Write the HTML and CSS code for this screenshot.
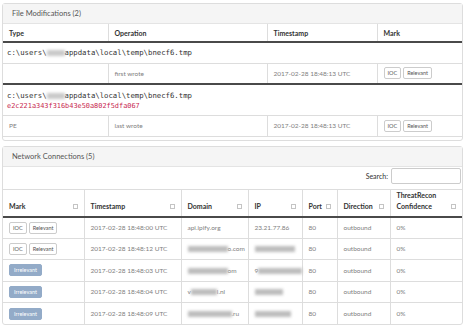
FILE: index.html
```html
<!DOCTYPE html>
<html lang="en">
<head>
    <meta charset="UTF-8">
    <title>Report</title>
    <link rel="stylesheet" href="styles.css">
</head>
<body>
<div class="page">
    <div class="panel">
        <div class="panel-heading">File Modifications (2)</div>
        <table class="tbl files">
            <colgroup>
                <col class="c-type">
                <col class="c-op">
                <col class="c-ts">
                <col>
            </colgroup>
            <thead>
            <tr><th>Type</th><th>Operation</th><th>Timestamp</th><th>Mark</th></tr>
            </thead>
            <tbody class="group">
            <tr class="path">
                <td colspan="4"><code class="fname">c:\users\<span class="blur b18"></span>appdata\local\temp\bnecf6.tmp</code></td>
            </tr>
            <tr class="op">
                <td></td>
                <td>first wrote</td>
                <td>2017-02-28 18:48:13 UTC</td>
                <td><button class="btn">IOC</button><button class="btn">Relevant</button></td>
            </tr>
            </tbody>
            <tbody class="group">
            <tr class="path hash-row">
                <td colspan="4">
                    <code class="fname">c:\users\<span class="blur b18"></span>appdata\local\temp\bnecf6.tmp</code>
                    <code class="hash">e2c221a343f316b43e50a802f5dfa067</code>
                </td>
            </tr>
            <tr class="op">
                <td>PE</td>
                <td>last wrote</td>
                <td>2017-02-28 18:48:13 UTC</td>
                <td><button class="btn">IOC</button><button class="btn">Relevant</button></td>
            </tr>
            </tbody>
        </table>
    </div>

    <div class="panel">
        <div class="panel-heading">Network Connections (5)</div>
        <div class="search">
            <label for="q">Search:</label>
            <input id="q" type="text">
        </div>
        <table class="tbl net">
            <colgroup>
                <col class="n-mark">
                <col class="n-ts">
                <col class="n-dom">
                <col class="n-ip">
                <col class="n-port">
                <col class="n-dir">
                <col>
            </colgroup>
            <thead>
            <tr>
                <th><div class="th-in">Mark<span class="sort"></span></div></th>
                <th><div class="th-in">Timestamp<span class="sort"></span></div></th>
                <th><div class="th-in">Domain<span class="sort"></span></div></th>
                <th><div class="th-in">IP<span class="sort"></span></div></th>
                <th><div class="th-in">Port<span class="sort"></span></div></th>
                <th><div class="th-in">Direction<span class="sort"></span></div></th>
                <th><div class="th-in">ThreatRecon<br>Confidence<span class="sort"></span></div></th>
            </tr>
            </thead>
            <tbody>
            <tr>
                <td><button class="btn">IOC</button><button class="btn">Relevant</button></td>
                <td>2017-02-28 18:48:00 UTC</td>
                <td>api.ipify.org</td>
                <td>23.21.77.86</td>
                <td>80</td>
                <td>outbound</td>
                <td>0%</td>
            </tr>
            <tr>
                <td><button class="btn">IOC</button><button class="btn">Relevant</button></td>
                <td>2017-02-28 18:48:12 UTC</td>
                <td class="clip"><span class="blur b40"></span>o.com</td>
                <td><span class="blur b40"></span></td>
                <td>80</td>
                <td>outbound</td>
                <td>0%</td>
            </tr>
            <tr>
                <td><button class="btn btn-irr">Irrelevant</button></td>
                <td>2017-02-28 18:48:03 UTC</td>
                <td class="clip"><span class="blur b40"></span>om</td>
                <td class="spill">9<span class="blur b44"></span></td>
                <td>80</td>
                <td>outbound</td>
                <td>0%</td>
            </tr>
            <tr>
                <td><button class="btn btn-irr">Irrelevant</button></td>
                <td>2017-02-28 18:48:04 UTC</td>
                <td>v<span class="blur b26"></span>l.nl</td>
                <td><span class="blur b28"></span></td>
                <td>80</td>
                <td>outbound</td>
                <td>0%</td>
            </tr>
            <tr>
                <td><button class="btn btn-irr">Irrelevant</button></td>
                <td>2017-02-28 18:48:09 UTC</td>
                <td class="clip"><span class="blur b44"></span>.ru</td>
                <td><span class="blur b36"></span></td>
                <td>80</td>
                <td>outbound</td>
                <td>0%</td>
            </tr>
            </tbody>
        </table>
    </div>
</div>
</body>
</html>
```

FILE: styles.css
```css
* {
    box-sizing: border-box;
    padding: 0;
    margin: 0;
}

body {
    font-family: Lato, "Open Sans", sans-serif;
    color: #333;
    background: #fff;
}

.page {
    padding: 3px 5px 0 2px;
}

.panel {
    border: 1px solid #ddd;
    border-radius: 3px;
    background: #fff;
}

.panel + .panel {
    margin-top: 5px;
}

.panel-heading {
    height: 20px;
    padding: 0 9px;
    background: #f5f5f5;
    border-bottom: 1px solid #e4e4e4;
    font-size: 7.5px;
    line-height: 20px;
    color: #555;
}

/* tables */
.tbl {
    width: 100%;
    border-collapse: collapse;
    table-layout: fixed;
}

.tbl th {
    font-size: 7px;
    font-weight: bold;
    text-align: left;
    vertical-align: bottom;
    padding: 0 6px 4px;
    color: #333;
    border-left: 1px solid #ddd;
    border-bottom: 2px solid #4a4a4a;
}

.tbl td {
    font-size: 6.5px;
    color: #808080;
    padding: 0 6px;
    border-top: 1px solid #ddd;
    border-left: 1px solid #ddd;
    vertical-align: middle;
    white-space: nowrap;
}

.tbl th:first-child,
.tbl td:first-child {
    border-left: none;
}

/* file modifications */
.c-type { width: 105px; }
.c-op { width: 159px; }
.c-ts { width: 110px; }

.files {
    margin-bottom: 3px;
}

.files thead th {
    height: 18px;
}

.files .path td {
    height: 21px;
    padding: 0 4px;
}

.files .hash-row td {
    height: 31px;
    padding-top: 2px;
}

.files .op td {
    height: 21px;
}

.files .group + .group tr:first-child td {
    border-top: 2px solid #4a4a4a;
}

.files tbody:last-child tr:last-child td {
    border-bottom: 1px solid #ddd;
}

.fname {
    display: block;
    font-family: "DejaVu Sans Mono", "Liberation Mono", monospace;
    font-size: 7.3px;
    color: #333;
    line-height: 10px;
}

.hash {
    display: block;
    font-family: "DejaVu Sans Mono", "Liberation Mono", monospace;
    font-size: 6.9px;
    color: #c7254e;
    line-height: 10px;
}

.blur {
    display: inline-block;
    height: 6px;
    background: #bdbdbd;
    filter: blur(1.4px);
    vertical-align: middle;
}

.b18 { width: 18px; background: #c9c9c9; }
.b26 { width: 26px; }
.b28 { width: 28px; }
.b36 { width: 36px; }
.b40 { width: 40px; }
.b44 { width: 44px; }

.btn {
    display: inline-block;
    font-family: Lato, "Open Sans", sans-serif;
    font-size: 5.5px;
    height: 12px;
    line-height: 10px;
    padding: 0 3px;
    border: 1px solid #ccc;
    border-radius: 2px;
    background: #fff;
    color: #555;
    margin-right: 2px;
    vertical-align: middle;
}

.btn-irr {
    background: #93abc8;
    border-color: #93abc8;
    color: #fff;
    padding: 0 4px;
}

/* network connections */
.search {
    display: flex;
    justify-content: flex-end;
    align-items: center;
    gap: 3px;
    padding: 1px 1px 5px;
}

.search label {
    font-size: 7px;
    color: #333;
}

.search input {
    width: 70px;
    height: 16px;
    border: 1px solid #ccc;
    border-radius: 2px;
}

.n-mark { width: 81px; }
.n-ts { width: 97px; }
.n-dom { width: 67px; }
.n-ip { width: 54px; }
.n-port { width: 35px; }
.n-dir { width: 53px; }

.net thead th {
    height: 25px;
    border-top: 1px solid #ddd;
    line-height: 11px;
}

.th-in {
    display: flex;
    justify-content: space-between;
    align-items: flex-end;
}

.sort {
    width: 5px;
    height: 5px;
    border: 1px solid #c4c4c4;
    margin-bottom: 3px;
    flex-shrink: 0;
}

.net td {
    height: 21.5px;
}

.clip {
    overflow: hidden;
}

.spill .blur {
    margin-right: -12px;
}
```
